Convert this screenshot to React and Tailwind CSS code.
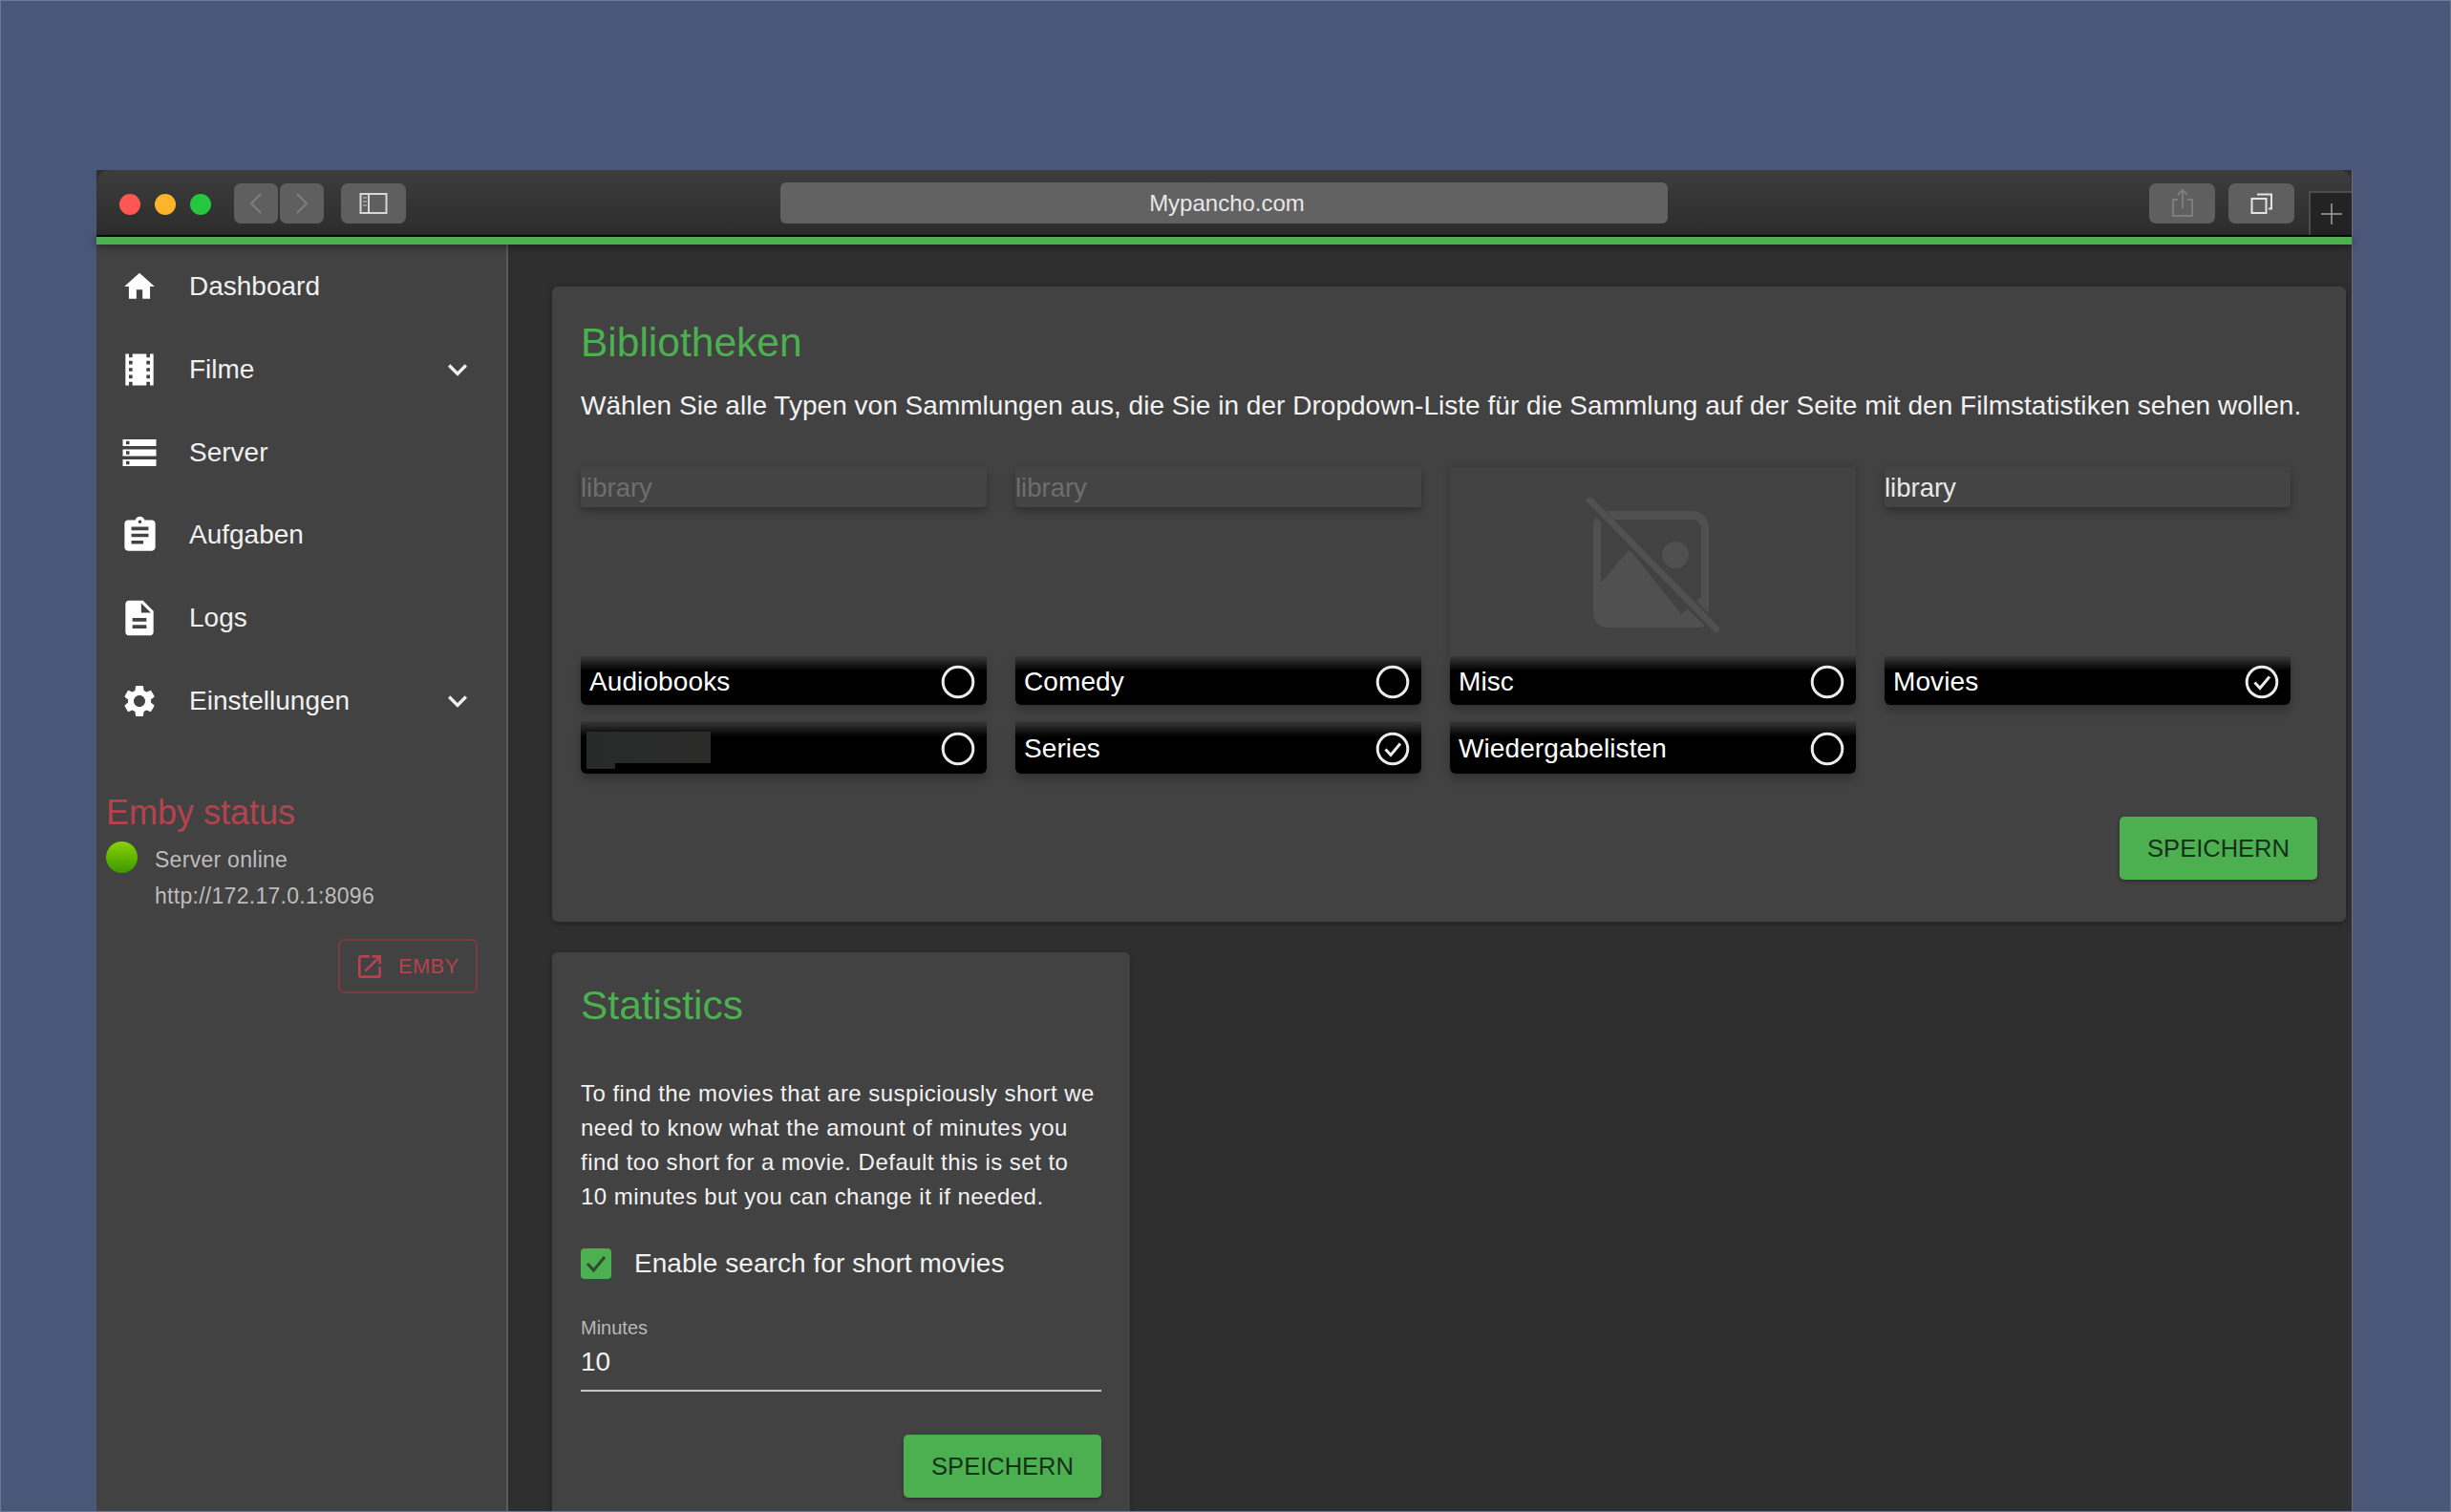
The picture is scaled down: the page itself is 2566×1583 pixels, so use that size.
import React from "react";
import { MdHome, MdLocalMovies, MdStorage, MdAssignment, MdDescription, MdSettings, MdExpandMore, MdOpenInNew } from "react-icons/md";

const nav = [
  [MdHome, "Dashboard", false, "w-[38px] h-[38px]"],
  [MdLocalMovies, "Filme", true, "w-[44px] h-[44px]"],
  [MdStorage, "Server", false, "w-[42px] h-[42px]"],
  [MdAssignment, "Aufgaben", false, "w-[43px] h-[43px]"],
  [MdDescription, "Logs", false, "w-[44px] h-[44px]"],
  [MdSettings, "Einstellungen", true, "w-[40px] h-[40px]"],
];

function NoImage() {
  return (
    <svg viewBox="0 0 141 142" className="w-[141px] h-[142px]" fill="none">
      <path fillRule="evenodd" d="M22 14h90a17 17 0 0 1 17 17v96a10 10 0 0 1-10 9H22a15 15 0 0 1-14-15V30a16 16 0 0 1 14-16zm0 9a7 7 0 0 0-6 7v59l30-35 54 68 21-18V31a9 9 0 0 0-9-8z" fill="#505050" />
      <ellipse cx="94" cy="60" rx="14" ry="14" fill="#505050" />
      <path d="M2 3 L137 138" stroke="#424242" strokeWidth="12" />
      <path d="M2 0 L139 140" stroke="#505050" strokeWidth="7" />
    </svg>
  );
}

function Radio({ checked }) {
  return (
    <svg viewBox="0 0 36 36" className="w-[36px] h-[36px] shrink-0" fill="none">
      <circle cx="18" cy="18" r="15.8" stroke="#ececec" strokeWidth="3" />
      {checked && <path d="M10.5 18.5l5.5 6 10-12" stroke="#ececec" strokeWidth="3" />}
    </svg>
  );
}

function Tile({ name, checked, kind }) {
  return (
    <div className="flex flex-col h-[249px]">
      {kind === "image" ? (
        <div className="h-[198px] bg-[#424242] shadow-[0_0_8px_rgba(0,0,0,0.25)] flex items-center justify-center rounded-t-[4px] pt-[8px]">
          <NoImage />
        </div>
      ) : (
        <div className="h-[198px]">
          <div className={`h-[42px] rounded-[4px] bg-[#444444] shadow-[0_4px_8px_rgba(0,0,0,0.3)] text-[27.5px] leading-[44px] ${kind === "lit" ? "text-[#e8e8e8]" : "text-[#6e6e6e]"}`}>library</div>
        </div>
      )}
      <Caption name={name} checked={checked} h="h-[51px]" />
    </div>
  );
}

function Caption({ name, checked, hidden, h }) {
  return (
    <div className={`${h} rounded-b-[6px] bg-[linear-gradient(to_bottom,#3a3a3a_0%,#000000_30%,#000000_100%)] shadow-[0_6px_10px_rgba(0,0,0,0.25)] flex items-center justify-between pl-[9px] pr-[12px] pt-[3px]`}>
      {hidden ? (
        <div className="flex flex-col -ml-[3px] mt-[3px]">
          <div className="w-[130px] h-[33px] bg-[linear-gradient(to_right,#282a2a,#2b2b2a)]" />
          <div className="w-[30px] h-[6px] bg-[#282a2a]" />
        </div>
      ) : (
        <span className="text-[28px] text-white tracking-[0.1px]">{name}</span>
      )}
      <Radio checked={checked} />
    </div>
  );
}

function SaveBtn() {
  return (
    <button className="w-[207px] h-[66px] rounded-[5px] bg-[#4caf50] text-[#15301a] text-[25.5px] shadow-[0_2px_4px_rgba(0,0,0,0.3)] font-normal">SPEICHERN</button>
  );
}

export default function App() {
  return (
    <div className="w-[2566px] h-[1583px] overflow-hidden bg-[#4a5779] pt-[177px] pl-[100px] border border-[#6f7a96] font-['Liberation_Sans',sans-serif]">
      <div className="w-[2362px] h-[1405px] flex flex-col bg-[#2f2f2f] border-r border-[#6d6d6d]">
        <div className="h-[68px] shrink-0 rounded-t-[14px] bg-[linear-gradient(to_bottom,#3d3d3d,#2c2c2c)] flex items-start">
          <div className="flex gap-[15px] ml-[24px] mt-[25px]">
            <span className="w-[22px] h-[22px] rounded-full bg-[#fc5753]" />
            <span className="w-[22px] h-[22px] rounded-full bg-[#fdb42a]" />
            <span className="w-[22px] h-[22px] rounded-full bg-[#25c73f]" />
          </div>
          <div className="flex gap-[2px] ml-[24px] mt-[14px]">
            <div className="w-[46px] h-[42px] rounded-[7px] bg-[#5f5f5f] flex items-center justify-center">
              <svg width="16" height="24" viewBox="0 0 16 24" fill="none"><path d="M13 2 3 12l10 10" stroke="#7f7f7f" strokeWidth="2" /></svg>
            </div>
            <div className="w-[46px] h-[42px] rounded-[7px] bg-[#5f5f5f] flex items-center justify-center">
              <svg width="16" height="24" viewBox="0 0 16 24" fill="none"><path d="M3 2l10 10L3 22" stroke="#7f7f7f" strokeWidth="2" /></svg>
            </div>
          </div>
          <div className="w-[68px] h-[42px] ml-[18px] mt-[14px] rounded-[7px] bg-[#5f5f5f] flex items-center justify-center">
            <svg width="30" height="24" viewBox="0 0 30 24" fill="none">
              <rect x="1.5" y="2" width="27" height="20" stroke="#d8d8d8" strokeWidth="2" />
              <path d="M10 2v20" stroke="#d8d8d8" strokeWidth="2" />
              <path d="M4 6h4M4 10h4M4 14h4" stroke="#a8a8a8" strokeWidth="1.5" />
            </svg>
          </div>
          <div className="w-[929px] h-[43px] ml-[392px] mt-[13px] rounded-[6px] bg-[#626262] flex items-center justify-center text-[#e6e6e6] text-[24px] pt-[1px] pl-[6px]">Mypancho.com</div>
          <div className="w-[69px] h-[42px] ml-[504px] mt-[14px] rounded-[7px] bg-[#5f5f5f] flex items-center justify-center">
            <svg width="24" height="30" viewBox="0 0 24 30" fill="none">
              <path d="M7 11H2v17h20V11h-5M12 20V2M7 6l5-5 5 5" stroke="#7d7d7d" strokeWidth="2" />
            </svg>
          </div>
          <div className="w-[69px] h-[42px] ml-[14px] mt-[14px] rounded-[7px] bg-[#5f5f5f] flex items-center justify-center">
            <svg width="24" height="24" viewBox="0 0 24 24" fill="none">
              <rect x="1.5" y="7" width="15" height="15" stroke="#e4e4e4" strokeWidth="2" />
              <path d="M7 2.5h15v15h-3" stroke="#e4e4e4" strokeWidth="2" />
            </svg>
          </div>
          <div className="w-[45px] h-[46px] ml-[15px] mt-[22px] bg-[#232323] border-l-2 border-t-2 border-[#4c4c4c] flex items-center justify-center">
            <svg width="22" height="22" viewBox="0 0 22 22" fill="none"><path d="M11 0v22M0 11h22" stroke="#a0a0a0" strokeWidth="1.5" /></svg>
          </div>
        </div>
        <div className="h-[10px] shrink-0 border-t-2 border-[#050505] bg-[#4caf50] relative shadow-[0_3px_8px_rgba(0,0,0,0.35)]" />
        <div className="flex-1 flex min-h-0">
          <aside className="w-[431px] shrink-0 bg-[#424242] border-r-2 border-[#5b5b5b] text-[#f0f0f0]">
            <nav>
              {nav.map(([Icon, label, chev, size], i) => (
                <div key={i} className="h-[86.7px] flex items-center pt-[2px]">
                  <div className="w-[90px] mr-[7px] flex justify-center shrink-0">
                    <Icon className={`${size} text-white`} />
                  </div>
                  <span className="text-[28px] flex-1">{label}</span>
                  {chev && <MdExpandMore className="w-[40px] h-[40px] mr-[31px] text-[#f0f0f0]" />}
                </div>
              ))}
            </nav>
            <div className="pl-[10px] mt-[55px]">
              <div className="text-[36px] leading-[40px] text-[#b5434f]">Emby status</div>
              <div className="flex mt-[10px]">
                <span className="w-[33px] h-[33px] rounded-full bg-[linear-gradient(to_bottom,#8bd000,#3a9a00)] shrink-0" />
                <div className="ml-[18px] text-[23px] leading-[38px] text-[#bdbdbd] tracking-[0.28px]">
                  <div>Server online</div>
                  <div>http://172.17.0.1:8096</div>
                </div>
              </div>
              <div className="flex justify-end mr-[30px] mt-[26px]">
                <div className="w-[146px] h-[57px] rounded-[6px] border-2 border-[#7c3a41] flex items-center pl-[15px] text-[#b5434f] text-[22px] tracking-[0.3px]">
                  <MdOpenInNew className="w-[32px] h-[32px] mr-[14px]" />
                  EMBY
                </div>
              </div>
            </div>
          </aside>
          <main className="flex-1 pl-[46px] pt-[44px] pr-[6px] overflow-hidden">
            <section className="h-[665px] bg-[#424242] rounded-[6px] shadow-[0_2px_6px_rgba(0,0,0,0.3)] pl-[30px] pr-[30px]">
              <h2 className="text-[42.5px] leading-[48px] text-[#4caf50] pt-[35px] h-[83px]">Bibliotheken</h2>
              <p className="text-[28px] leading-[40px] text-[#f2f2f2] mt-[22px] whitespace-nowrap tracking-[0.03px]">Wählen Sie alle Typen von Sammlungen aus, die Sie in der Dropdown-Liste für die Sammlung auf der Seite mit den Filmstatistiken sehen wollen.</p>
              <div className="grid grid-cols-[425px_425px_425px_425px] gap-x-[30px] gap-y-[17px] mt-[44px]">
                <Tile name="Audiobooks" />
                <Tile name="Comedy" />
                <Tile name="Misc" kind="image" />
                <Tile name="Movies" kind="lit" checked />
                <Caption hidden h="h-[55px]" />
                <Caption name="Series" checked h="h-[55px]" />
                <Caption name="Wiedergabelisten" h="h-[55px]" />
              </div>
              <div className="flex justify-end mt-[45px]"><SaveBtn /></div>
            </section>
            <section className="w-[605px] h-[700px] mt-[32px] bg-[#424242] rounded-[6px] shadow-[0_2px_6px_rgba(0,0,0,0.3)] pl-[30px] pr-[30px]">
              <h2 className="text-[42.5px] leading-[48px] text-[#4caf50] pt-[32px] h-[80px]">Statistics</h2>
              <p className="text-[24px] leading-[36px] text-[#f2f2f2] mt-[50px] whitespace-nowrap tracking-[0.47px]">
                To find the movies that are suspiciously short we<br />
                need to know what the amount of minutes you<br />
                find too short for a movie. Default this is set to<br />
                10 minutes but you can change it if needed.
              </p>
              <div className="flex items-center mt-[31px]">
                <span className="w-[32px] h-[32px] rounded-[4px] bg-[#4caf50] flex items-center justify-center">
                  <svg width="24" height="24" viewBox="0 0 24 24" fill="none"><path d="M3 12l6.5 7L21 5" stroke="#2f4a30" strokeWidth="3" /></svg>
                </span>
                <span className="ml-[24px] text-[28px] text-[#f2f2f2] tracking-[0.05px]">Enable search for short movies</span>
              </div>
              <div className="mt-[34px] text-[20px] leading-[24px] text-[#b8b8b8]">Minutes</div>
              <div className="mt-[4px] h-[51px] text-[28px] leading-[40px] text-[#f2f2f2] border-b-2 border-[#c4c4c4]">10</div>
              <div className="flex justify-end mt-[45px]"><SaveBtn /></div>
            </section>
          </main>
        </div>
      </div>
    </div>
  );
}
